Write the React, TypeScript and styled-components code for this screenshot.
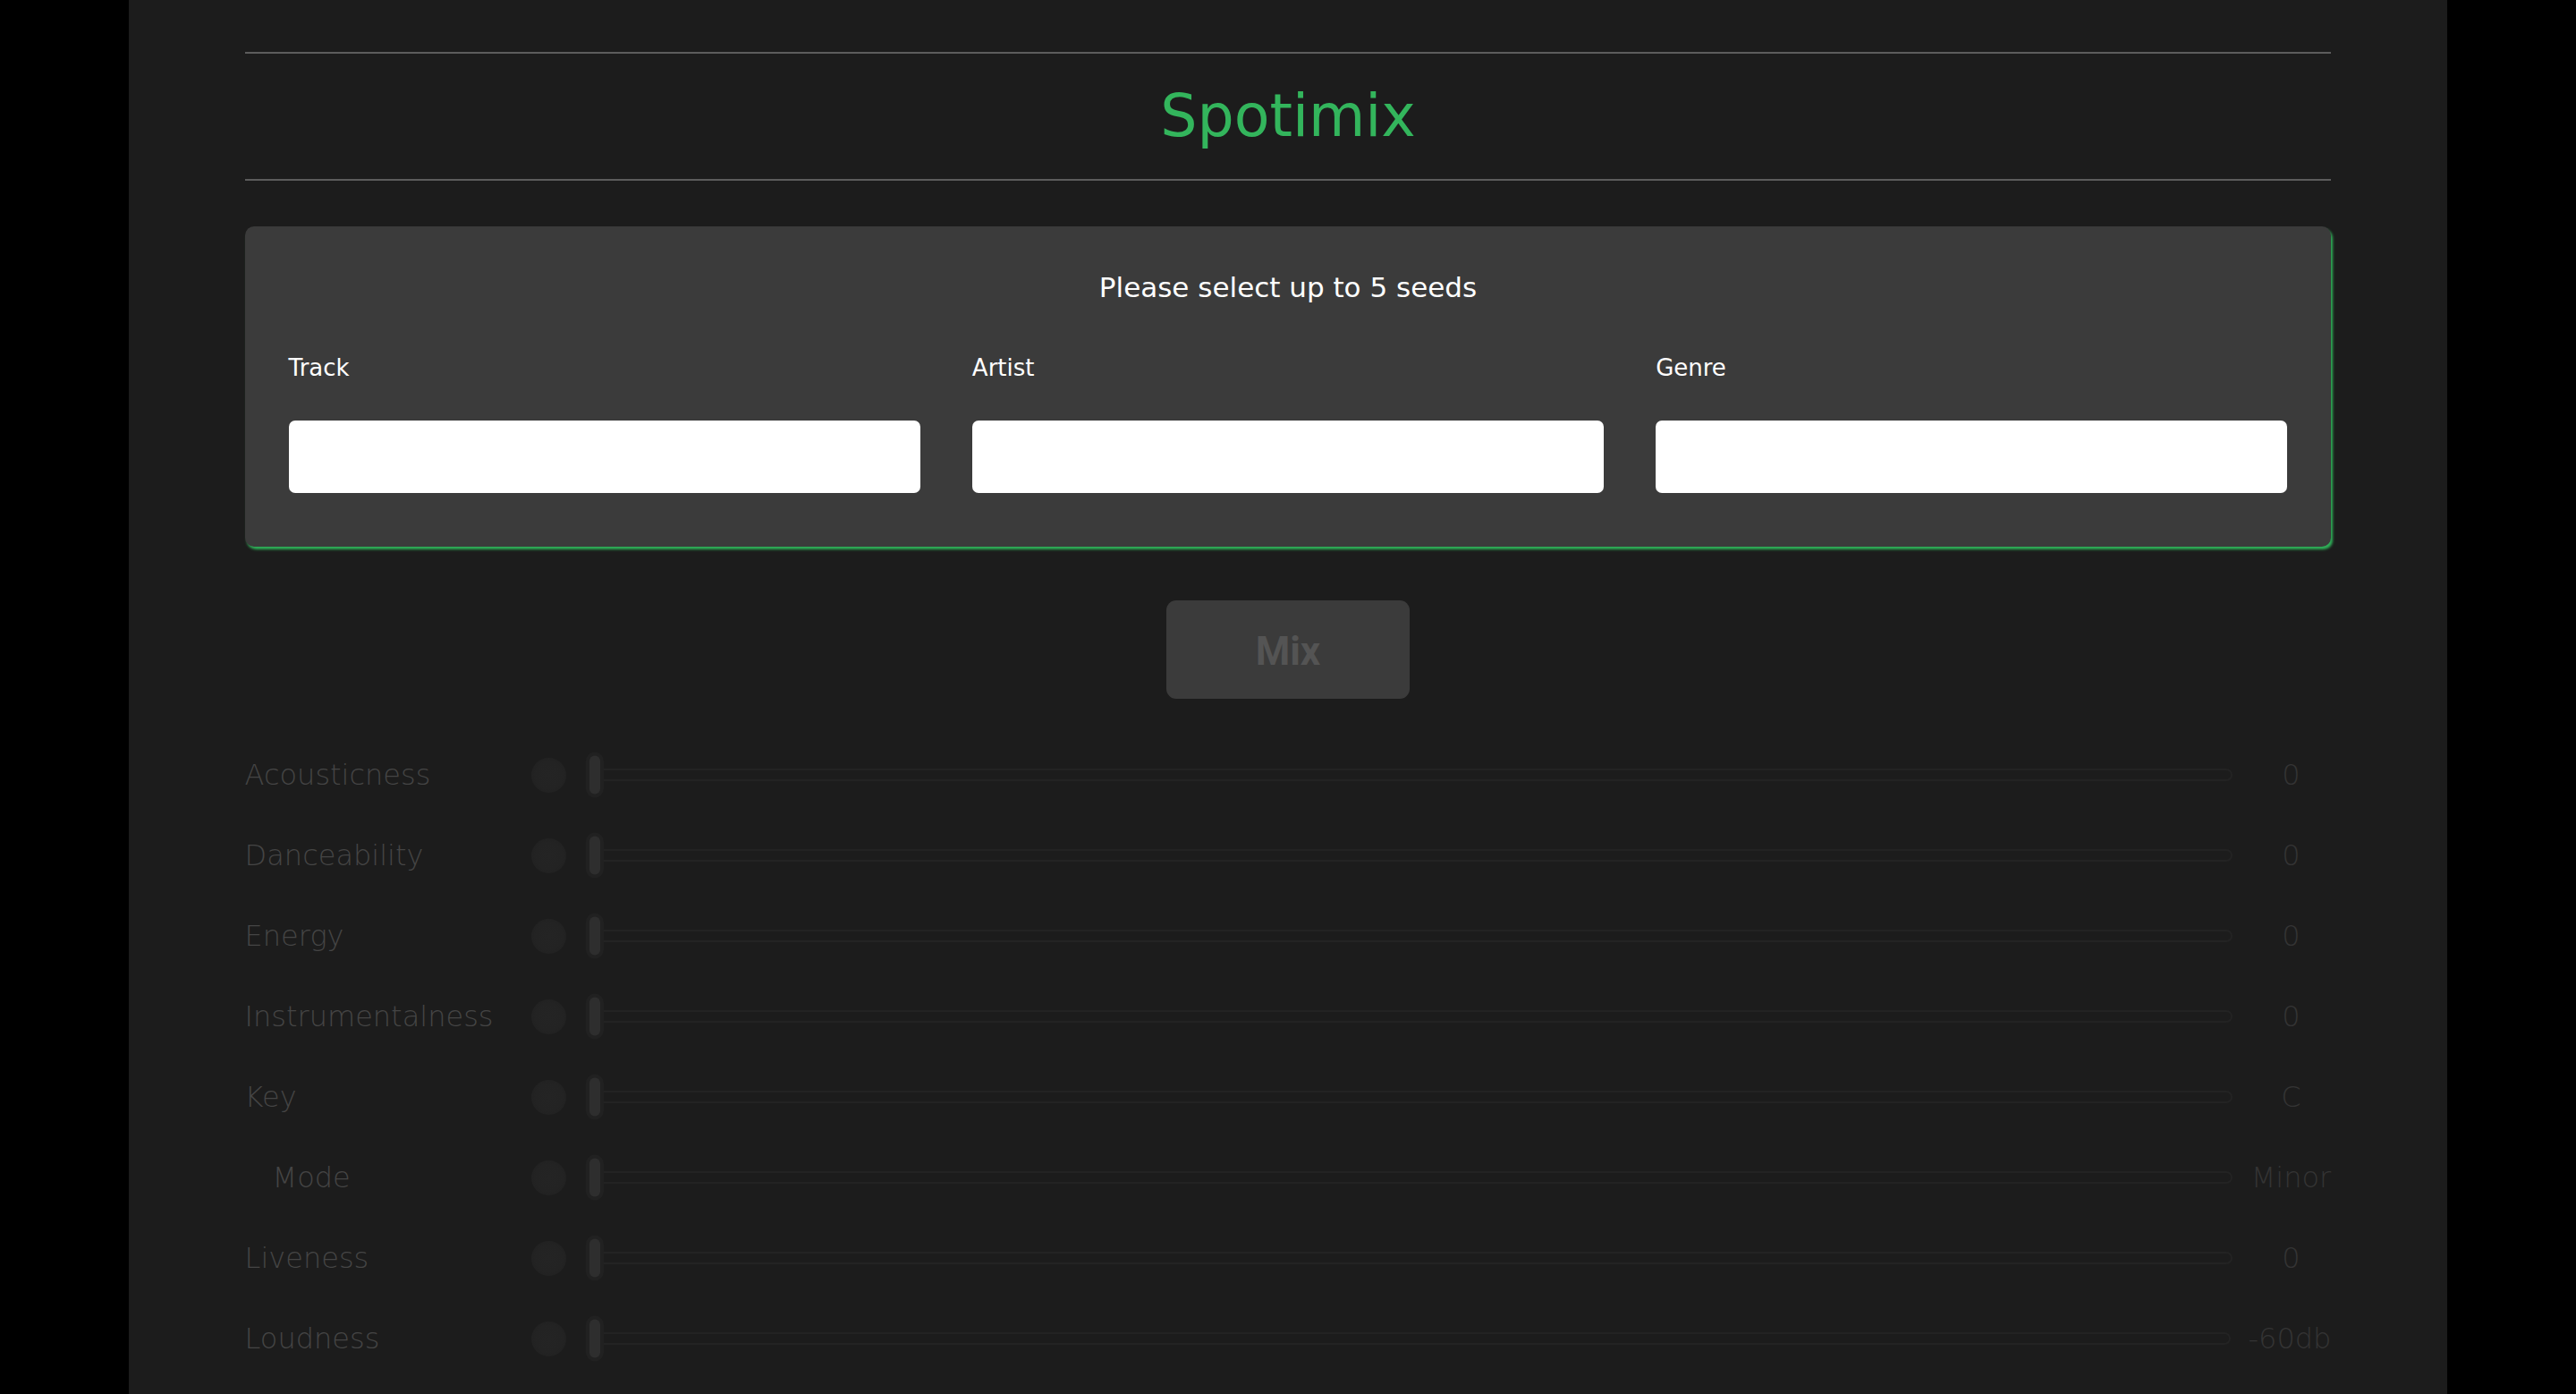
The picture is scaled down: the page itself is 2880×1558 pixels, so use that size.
import React from "react";
import styled, { createGlobalStyle } from "styled-components";

const GlobalStyle = createGlobalStyle`
  html, body {
    margin: 0;
    padding: 0;
    background: #000000;
  }
  body {
    font-family: "DejaVu Sans", "Liberation Sans", sans-serif;
  }
  * { box-sizing: border-box; }
`;

const Page = styled.div`
  width: 90%;
  min-height: 100vh;
  margin: 0 auto;
  background: #1c1c1c;
  padding-top: 58px;
  padding-bottom: 16px;
`;

const Inner = styled.div`
  width: 90%;
  margin: 0 auto;
  display: flex;
  flex-direction: column;
`;

const Header = styled.header`
  border-top: 2px solid #5c5c5c;
  border-bottom: 2px solid #5c5c5c;
  height: 144px;
  display: flex;
  align-items: center;
  justify-content: center;
`;

const Title = styled.h1`
  margin: 0;
  font-family: "DejaVu Sans", sans-serif;
  font-weight: 400;
  font-size: 65px;
  line-height: 140px;
  color: #33b55c;
`;

const Card = styled.section`
  margin-top: 51px;
  background: #3b3b3b;
  border-radius: 10px;
  box-shadow: 2px 3px 3px #2fb259;
  padding: 51px 49px 60px;
  display: flex;
  flex-direction: column;
`;

const CardHeading = styled.h2`
  margin: 0;
  text-align: center;
  font-family: "DejaVu Sans", sans-serif;
  font-weight: 400;
  font-size: 31px;
  line-height: 34px;
  color: #ffffff;
`;

const Fields = styled.div`
  margin-top: 58px;
  display: grid;
  grid-template-columns: repeat(3, 1fr);
  column-gap: 58px;
`;

const Field = styled.label`
  display: flex;
  flex-direction: column;
  gap: 44px;
`;

const FieldLabel = styled.span`
  font-family: "DejaVu Sans", sans-serif;
  font-size: 26px;
  line-height: 30px;
  color: #ffffff;
`;

const TextInput = styled.input`
  height: 81px;
  width: 100%;
  border: none;
  border-radius: 7px;
  background: #ffffff;
  outline: none;
  font-size: 26px;
  padding: 0 16px;
`;

const MixButton = styled.button`
  align-self: center;
  margin-top: 60px;
  width: 272px;
  height: 110px;
  padding: 4px 0 0;
  border: none;
  border-radius: 11px;
  background: #3b3b3b;
  color: #545454;
  font-family: Roboto, "Liberation Sans", sans-serif;
  font-weight: 700;
  font-size: 44px;
  display: flex;
  align-items: center;
  justify-content: center;
  cursor: default;
`;

const Features = styled.div`
  margin-top: 40px;
  display: flex;
  flex-direction: column;
`;

const Row = styled.div`
  height: 90px;
  display: flex;
  align-items: center;
`;

const RowLabel = styled.span<{ $indent?: boolean }>`
  width: 320px;
  flex: none;
  padding-left: ${(p) => (p.$indent ? "31px" : "0")};
  font-family: "DejaVu Sans", sans-serif;
  font-weight: 300;
  font-size: 32px;
  color: #454545;
`;

const Dot = styled.span`
  width: 39px;
  height: 39px;
  flex: none;
  border-radius: 50%;
  background: radial-gradient(circle, #242424 0%, #232323 55%, #1f1f1f 100%);
`;

const SliderWrap = styled.div`
  position: relative;
  flex: 1;
  margin-left: 32px;
  height: 52px;
  display: flex;
  align-items: center;
`;

const Track = styled.div`
  width: 100%;
  height: 14px;
  border: 2px solid #232323;
  border-radius: 7px;
`;

const Thumb = styled.span`
  position: absolute;
  left: -6px;
  top: 50%;
  transform: translateY(-50%);
  width: 12px;
  height: 43px;
  border-radius: 6px;
  background: #2e2e2e;
  box-shadow: 0 0 0 4px #212121;
`;

const Value = styled.span`
  min-width: 90px;
  margin-left: 20px;
  flex: none;
  text-align: center;
  font-family: "DejaVu Sans", sans-serif;
  font-weight: 300;
  font-size: 32px;
  color: #343434;
`;

const features: { name: string; value: string; indent?: boolean }[] = [
  { name: "Acousticness", value: "0" },
  { name: "Danceability", value: "0" },
  { name: "Energy", value: "0" },
  { name: "Instrumentalness", value: "0" },
  { name: "Key", value: "C" },
  { name: "Mode", value: "Minor", indent: true },
  { name: "Liveness", value: "0" },
  { name: "Loudness", value: "-60db" },
];

export default function App() {
  return (
    <>
      <GlobalStyle />
      <Page>
        <Inner>
          <Header>
            <Title>Spotimix</Title>
          </Header>
          <Card>
            <CardHeading>Please select up to 5 seeds</CardHeading>
            <Fields>
              {["Track", "Artist", "Genre"].map((f) => (
                <Field key={f}>
                  <FieldLabel>{f}</FieldLabel>
                  <TextInput type="text" />
                </Field>
              ))}
            </Fields>
          </Card>
          <MixButton disabled>Mix</MixButton>
          <Features>
            {features.map((f) => (
              <Row key={f.name}>
                <RowLabel $indent={f.indent}>{f.name}</RowLabel>
                <Dot />
                <SliderWrap>
                  <Track />
                  <Thumb />
                </SliderWrap>
                <Value>{f.value}</Value>
              </Row>
            ))}
          </Features>
        </Inner>
      </Page>
    </>
  );
}
